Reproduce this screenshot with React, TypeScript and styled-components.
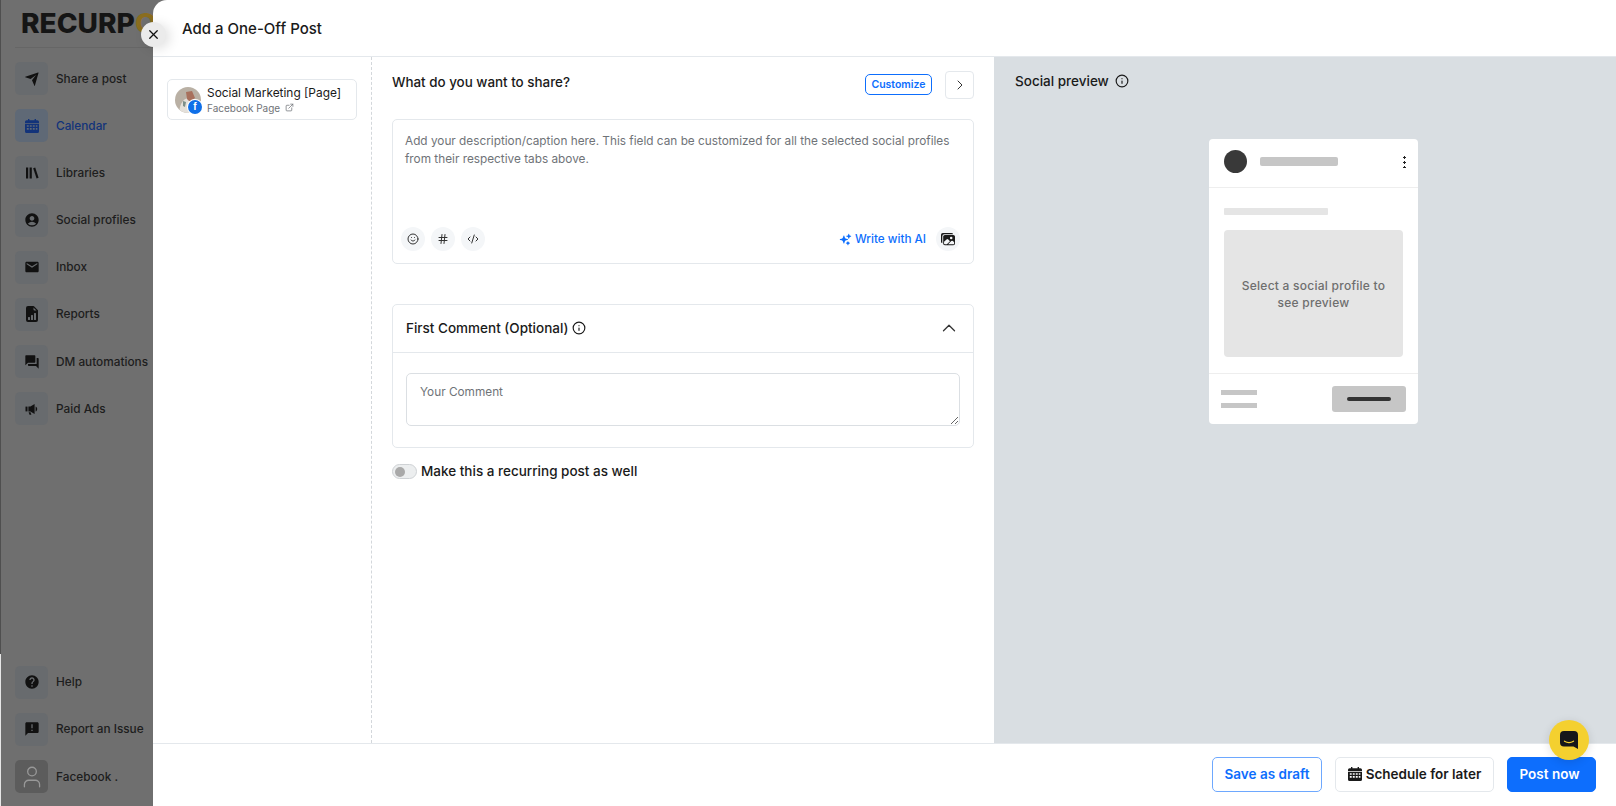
import styled, { createGlobalStyle } from "styled-components";
import type { ReactNode } from "react";
import { MdAccountCircle, MdAnnouncement, MdForum, MdHelp, MdMail } from "react-icons/md";
import { BsFileEarmarkBarGraphFill } from "react-icons/bs";
import { RiSendPlaneFill } from "react-icons/ri";
import { HiSparkles } from "react-icons/hi2";
import { IoImages } from "react-icons/io5";
import {
  LuChevronRight,
  LuChevronUp,
  LuCodeXml,
  LuExternalLink,
  LuHash,
  LuInfo,
  LuSmile,
  LuUser,
  LuX,
} from "react-icons/lu";

const colors = {
  blue: "#0d6efd",
  line: "#e4e8ec",
  dimBg: "#6f6f6f",
  dimBox: "#686b6e",
  dimText: "#1d1d1d",
  text: "#1a1a1a",
  muted: "#6f7378",
};

const GlobalStyle = createGlobalStyle`
  * { box-sizing: border-box; }
  html, body { margin: 0; height: 100%; }
  body { font-family: Inter, "Liberation Sans", sans-serif; color: ${colors.text}; background: ${colors.dimBg}; }
`;

const Page = styled.div`
  display: flex;
  height: 100vh;
  overflow: hidden;
`;

/* dimmed app nav behind the drawer */
const Sidebar = styled.aside`
  position: relative;
  flex: 0 0 153px;
  display: flex;
  flex-direction: column;
  background: ${colors.dimBg};
  padding: 0 0 13px 15px;
  &::before {
    content: "";
    position: absolute;
    left: 0;
    top: 0;
    width: 1px;
    height: 654px;
    background: #4f4f4f;
  }
  &::after {
    content: "";
    position: absolute;
    left: 0;
    top: 654px;
    bottom: 0;
    width: 1px;
    background: #e6e6e6;
  }
`;

const LogoRow = styled.div`
  height: 48px;
  margin-bottom: 14px;
  padding: 8px 0 0 6px;
  border-bottom: 1px solid #666;
  white-space: nowrap;
`;

const LogoText = styled.span`
  display: inline-block;
  font-size: 27px;
  line-height: 32px;
  font-weight: 800;
  color: #151515;
  transform: scaleX(1.04);
  transform-origin: left center;
`;

const LogoRing = styled.span`
  color: #8a6d1f;
`;

const NavList = styled.nav`
  display: flex;
  flex-direction: column;
  gap: 14.2px;
`;

const BottomNav = styled(NavList)`
  margin-top: auto;
`;

const NavItem = styled.div`
  display: flex;
  align-items: center;
  gap: 8px;
  height: 33px;
`;

const NavIcon = styled.span<{ $active?: boolean; $user?: boolean }>`
  flex: 0 0 33px;
  height: 33px;
  display: flex;
  align-items: center;
  justify-content: center;
  border-radius: 5px;
  font-size: 16px;
  color: ${(p) => (p.$active ? "#12337a" : p.$user ? "#989898" : "#111")};
  background: ${(p) => (p.$active ? "#5f6976" : p.$user ? "#5c5c5c" : colors.dimBox)};
`;

const NavLabel = styled.span<{ $active?: boolean }>`
  font-size: 11.8px;
  font-weight: 500;
  white-space: nowrap;
  color: ${(p) => (p.$active ? "#12337a" : colors.dimText)};
`;

const Drawer = styled.main`
  position: relative;
  flex: 1;
  min-width: 0;
  display: flex;
  flex-direction: column;
  background: #fff;
  border-top-left-radius: 14px;
`;

const CloseButton = styled.button`
  position: absolute;
  left: -12px;
  top: 22px;
  width: 25px;
  height: 25px;
  padding: 0;
  border: 0;
  border-radius: 50%;
  display: flex;
  align-items: center;
  justify-content: center;
  font-size: 15px;
  color: #111;
  background: #ebebeb;
  box-shadow: 4px 2px 12px rgba(0, 0, 0, 0.12);
`;

const DrawerHeader = styled.header`
  flex: 0 0 57px;
  display: flex;
  align-items: center;
  padding-left: 29px;
  border-bottom: 1px solid ${colors.line};
  font-size: 15px;
  font-weight: 500;
`;

const DrawerBody = styled.div`
  flex: 1;
  min-height: 0;
  display: flex;
`;

const ProfilesColumn = styled.section`
  flex: 0 0 219px;
  padding: 22px 14px;
  border-right: 1px dashed #d3d7db;
`;

const ProfileCard = styled.div`
  display: flex;
  align-items: center;
  gap: 6px;
  height: 41px;
  padding-left: 7px;
  border: 1px solid ${colors.line};
  border-radius: 5px;
`;

const AvatarWrap = styled.div`
  position: relative;
  width: 26px;
  height: 26px;
  flex: none;
`;

const FbBadge = styled.span`
  position: absolute;
  right: -1px;
  bottom: -1px;
  width: 14px;
  height: 14px;
  border-radius: 50%;
  display: flex;
  align-items: center;
  justify-content: center;
  background: #0f6fe8;
  box-shadow: 0 0 0 1px #fff;
  color: #fff;
  font-family: "Liberation Sans", sans-serif;
  font-size: 10px;
  font-weight: 700;
`;

const ProfileName = styled.div`
  font-size: 11.9px;
  line-height: 16px;
  white-space: nowrap;
`;

const ProfileType = styled.div`
  display: flex;
  align-items: center;
  gap: 5px;
  font-size: 10px;
  line-height: 14px;
  color: ${colors.muted};
  svg {
    font-size: 9px;
  }
`;

const EditorColumn = styled.section`
  flex: 0 0 622px;
  padding: 14px 20px 0;
`;

const EditorTop = styled.div`
  display: flex;
  align-items: flex-start;
  margin-bottom: 20px;
`;

const Heading = styled.h2`
  flex: 1;
  margin: 1px 0 0;
  font-size: 13.4px;
  line-height: 20px;
  font-weight: 500;
`;

const CustomizeButton = styled.button`
  height: 21px;
  width: 67px;
  margin: 3px 13px 0 0;
  padding: 0;
  border: 1px solid ${colors.blue};
  border-radius: 5px;
  background: #fff;
  color: ${colors.blue};
  font: 600 10.5px Inter, sans-serif;
`;

const SquareButton = styled.button`
  width: 29px;
  height: 28px;
  padding: 0;
  border: 1px solid ${colors.line};
  border-radius: 4px;
  background: #fff;
  color: #333;
  font-size: 16px;
  display: flex;
  align-items: center;
  justify-content: center;
`;

const CaptionCard = styled.div`
  height: 145px;
  display: flex;
  flex-direction: column;
  justify-content: space-between;
  padding: 12px 13px 12px 8px;
  border: 1px solid ${colors.line};
  border-radius: 5px;
`;

const CaptionText = styled.p`
  margin: 0;
  padding-left: 4px;
  font-size: 11.8px;
  line-height: 18px;
  color: ${colors.muted};
`;

const CaptionTools = styled.div`
  display: flex;
  align-items: center;
  gap: 6px;
`;

const RoundTool = styled.span<{ $dark?: boolean }>`
  width: 24px;
  height: 24px;
  border-radius: 50%;
  display: flex;
  align-items: center;
  justify-content: center;
  font-size: ${(p) => (p.$dark ? "14px" : "12px")};
  color: ${(p) => (p.$dark ? "#1a1a1a" : "#333")};
  background: #f4f6f8;
`;

const WriteAi = styled.span`
  margin-left: auto;
  margin-right: 4px;
  display: flex;
  align-items: center;
  gap: 3px;
  font-size: 11.7px;
  font-weight: 500;
  color: ${colors.blue};
  svg {
    font-size: 13px;
  }
`;

const CommentCard = styled.div`
  margin-top: 40px;
  border: 1px solid ${colors.line};
  border-radius: 5px;
`;

const CommentHeader = styled.div`
  height: 48px;
  display: flex;
  align-items: center;
  gap: 4px;
  padding: 0 13px 2px;
  border-bottom: 1px solid ${colors.line};
  font-size: 13.5px;
  font-weight: 500;
`;

const InfoMark = styled(LuInfo)`
  font-size: 14px;
`;

const CollapseIcon = styled(LuChevronUp)`
  margin-left: auto;
  font-size: 22px;
  color: #333;
`;

const CommentBody = styled.div`
  padding: 20px 13px 21px;
`;

const CommentInput = styled.textarea`
  display: block;
  width: 100%;
  height: 53px;
  padding: 9px 13px;
  border: 1px solid #dbdfe3;
  border-radius: 5px;
  outline: none;
  resize: vertical;
  font: 11.8px/18px Inter, sans-serif;
  &::placeholder {
    color: ${colors.muted};
    opacity: 1;
  }
`;

const RecurringRow = styled.label`
  display: flex;
  align-items: center;
  gap: 4px;
  margin-top: 15px;
  font-size: 13.5px;
  font-weight: 500;
`;

const Toggle = styled.span`
  width: 25px;
  height: 15px;
  padding: 2px;
  border: 1px solid #cfd2d5;
  border-radius: 8px;
  background: #eceeef;
  &::before {
    content: "";
    display: block;
    width: 10px;
    height: 10px;
    border-radius: 50%;
    background: #a9a9a9;
  }
`;

const PreviewColumn = styled.section`
  flex: 1;
  padding: 14px 21px;
  background: #d9dee2;
`;

const PreviewTitle = styled.div`
  display: flex;
  align-items: center;
  gap: 6px;
  height: 20px;
  font-size: 13.5px;
  font-weight: 500;
`;

const PreviewCard = styled.div`
  width: 209px;
  margin: 48px 0 0 194px;
  border-radius: 4px;
  background: #fff;
`;

const PreviewHead = styled.div`
  height: 49px;
  display: flex;
  align-items: center;
  padding: 0 12px 3px 15px;
  border-bottom: 1px solid #eeeeee;
`;

const PreviewDot = styled.span`
  width: 23px;
  height: 23px;
  border-radius: 50%;
  background: #393939;
`;

const NameBar = styled.span`
  width: 78px;
  height: 9px;
  margin-left: 13px;
  border-radius: 2px;
  background: #c6c6c6;
`;

const Kebab = styled.span`
  margin-left: auto;
  width: 3px;
  height: 13px;
  background: radial-gradient(circle, #222 1.1px, transparent 1.4px) 0 0 / 3px 5px;
`;

const PreviewBody = styled.div`
  padding: 20px 15px 16px;
  border-bottom: 1px solid #eeeeee;
`;

const CaptionBar = styled.div`
  width: 104px;
  height: 7px;
  margin-bottom: 15px;
  border-radius: 1px;
  background: #e5e5e5;
`;

const PreviewImage = styled.div`
  height: 127px;
  display: flex;
  align-items: center;
  justify-content: center;
  padding: 0 10px;
  border-radius: 4px;
  background: #e5e5e5;
  text-align: center;
  font-size: 12px;
  line-height: 17px;
  font-weight: 500;
  letter-spacing: 0.25px;
  color: #6e6e6e;
`;

const PreviewFoot = styled.div`
  height: 50px;
  display: flex;
  align-items: center;
  justify-content: space-between;
  padding: 0 12px;
`;

const FootLines = styled.div`
  display: flex;
  flex-direction: column;
  gap: 8px;
`;

const FootLine = styled.span`
  width: 36px;
  height: 5px;
  background: #c6c6c6;
`;

const FootButton = styled.span`
  width: 74px;
  height: 26px;
  display: flex;
  align-items: center;
  justify-content: center;
  border-radius: 3px;
  background: #c6c6c6;
  &::before {
    content: "";
    width: 44px;
    height: 4px;
    border-radius: 2px;
    background: #333;
  }
`;

const DrawerFooter = styled.footer`
  position: relative;
  flex: 0 0 63px;
  display: flex;
  align-items: center;
  justify-content: flex-end;
  gap: 13px;
  padding: 0 20px 2px 0;
  border-top: 1px solid ${colors.line};
`;

const FooterButton = styled.button<{ $kind: "outline" | "plain" | "solid" }>`
  height: 35px;
  padding: 0 ${(p) => (p.$kind === "solid" ? "4px" : "0")} 0 0;
  display: flex;
  align-items: center;
  justify-content: center;
  gap: 4px;
  width: ${(p) => (p.$kind === "outline" ? "110px" : p.$kind === "plain" ? "159px" : "89px")};
  border-radius: 5px;
  border: 1px solid ${(p) => (p.$kind === "outline" ? "#6ea8fe" : p.$kind === "plain" ? colors.line : colors.blue)};
  background: ${(p) => (p.$kind === "solid" ? colors.blue : "#fff")};
  color: ${(p) => (p.$kind === "plain" ? colors.text : p.$kind === "solid" ? "#fff" : colors.blue)};
  font: 600 13.5px Inter, sans-serif;
`;

const ChatBubble = styled.div`
  position: absolute;
  right: 27px;
  top: -24px;
  width: 40px;
  height: 40px;
  border-radius: 50%;
  display: flex;
  align-items: center;
  justify-content: center;
  background: #f4d02f;
  box-shadow: 0 2px 10px rgba(0, 0, 0, 0.12);
`;

type NavEntry = { label: string; icon: ReactNode; active?: boolean; user?: boolean };

const LibraryIcon = () => (
  <svg width="16" height="16" viewBox="0 0 16 16" fill="#111">
    <rect x="2" y="2.5" width="2.2" height="11" />
    <rect x="5.6" y="2.5" width="2.2" height="11" />
    <path d="M9.2 3.2 11.2 2.5 14.6 12.8 12.6 13.5z" />
  </svg>
);

const CalendarGrid = ({ size = 14 }: { size?: number }) => (
  <svg width={size} height={size} viewBox="0 0 14 14" fill="currentColor">
    <path d="M3 0h1.4v1.2h5.2V0H11v1.2h1.4A1.6 1.6 0 0 1 14 2.8V3.9H0V2.8a1.6 1.6 0 0 1 1.6-1.6H3z" />
    <path
      fillRule="evenodd"
      d="M0 4.7h14v7.7a1.6 1.6 0 0 1-1.6 1.6H1.6A1.6 1.6 0 0 1 0 12.4zM1.8 6.2v1.6h1.9V6.2zm3 0v1.6h1.9V6.2zm3 0v1.6h1.9V6.2zm3 0v1.6h1.6V6.2zm-9 2.9v1.6h1.9V9.1zm3 0v1.6h1.9V9.1zm3 0v1.6h1.9V9.1zm3 0v1.6h1.6V9.1z"
    />
  </svg>
);

const MegaphoneIcon = () => (
  <svg width="16" height="16" viewBox="0 0 16 16" fill="#111">
    <path d="M1.5 5.6h2v4.8h-2z" />
    <path d="M4.4 5.6h2L10.6 3v10L6.4 10.4h-2z" />
    <path d="M11.6 5.4c1 .4 1.6 1.4 1.6 2.6s-.6 2.2-1.6 2.6z" />
    <path d="M4.6 11.2h1.9l.9 2.6H5.5z" />
  </svg>
);

const mainNav: NavEntry[] = [
  { label: "Share a post", icon: <RiSendPlaneFill /> },
  { label: "Calendar", icon: <CalendarGrid />, active: true },
  { label: "Libraries", icon: <LibraryIcon /> },
  { label: "Social profiles", icon: <MdAccountCircle /> },
  { label: "Inbox", icon: <MdMail /> },
  { label: "Reports", icon: <BsFileEarmarkBarGraphFill /> },
  { label: "DM automations", icon: <MdForum /> },
  { label: "Paid Ads", icon: <MegaphoneIcon /> },
];

const bottomNav: NavEntry[] = [
  { label: "Help", icon: <MdHelp /> },
  { label: "Report an Issue", icon: <MdAnnouncement /> },
  { label: "Facebook .", icon: <LuUser size={26} strokeWidth={1.2} />, user: true },
];

const renderNav = (items: NavEntry[]) =>
  items.map((item) => (
    <NavItem key={item.label}>
      <NavIcon $active={item.active} $user={item.user}>
        {item.icon}
      </NavIcon>
      <NavLabel $active={item.active}>{item.label}</NavLabel>
    </NavItem>
  ));

const ProfilePhoto = () => (
  <svg width="26" height="26" viewBox="0 0 26 26">
    <defs>
      <clipPath id="photo">
        <circle cx="13" cy="13" r="13" />
      </clipPath>
    </defs>
    <g clipPath="url(#photo)">
      <rect width="26" height="26" fill="#b9b0a4" />
      <path d="M4 26C5 15 9 11 15 11s8 6 9 15z" fill="#e4e0da" />
      <path d="M11 5l6-1 3 7-5 4-3-3z" fill="#a8705c" />
      <path d="M8 14l3 1-1 5-2-1z" fill="#7d8f8a" />
    </g>
  </svg>
);

const ChatGlyph = () => (
  <svg width="20" height="20" viewBox="0 0 20 20">
    <path d="M5 1h10a4 4 0 0 1 4 4v14l-4.5-2.6H5a4 4 0 0 1-4-4V5a4 4 0 0 1 4-4z" fill="#15171a" />
    <path d="M5.5 11.2c2.6 1.6 6.4 1.6 9 0" fill="none" stroke="#f4d02f" strokeWidth="1.3" strokeLinecap="round" />
  </svg>
);

export default function App() {
  return (
    <Page>
      <GlobalStyle />
      <Sidebar>
        <LogoRow>
          <LogoText>
            RECURP<LogoRing>O</LogoRing>
          </LogoText>
        </LogoRow>
        <NavList>{renderNav(mainNav)}</NavList>
        <BottomNav>{renderNav(bottomNav)}</BottomNav>
      </Sidebar>

      <Drawer>
        <CloseButton aria-label="Close">
          <LuX />
        </CloseButton>
        <DrawerHeader>Add a One-Off Post</DrawerHeader>

        <DrawerBody>
          <ProfilesColumn>
            <ProfileCard>
              <AvatarWrap>
                <ProfilePhoto />
                <FbBadge>f</FbBadge>
              </AvatarWrap>
              <div>
                <ProfileName>Social Marketing [Page]</ProfileName>
                <ProfileType>
                  Facebook Page <LuExternalLink />
                </ProfileType>
              </div>
            </ProfileCard>
          </ProfilesColumn>

          <EditorColumn>
            <EditorTop>
              <Heading>What do you want to share?</Heading>
              <CustomizeButton>Customize</CustomizeButton>
              <SquareButton aria-label="Next">
                <LuChevronRight strokeWidth={1.5} />
              </SquareButton>
            </EditorTop>

            <CaptionCard>
              <CaptionText>
                Add your description/caption here. This field can be customized for all the selected social profiles
                from their respective tabs above.
              </CaptionText>
              <CaptionTools>
                <RoundTool>
                  <LuSmile />
                </RoundTool>
                <RoundTool>
                  <LuHash />
                </RoundTool>
                <RoundTool>
                  <LuCodeXml />
                </RoundTool>
                <WriteAi>
                  <HiSparkles /> Write with AI
                </WriteAi>
                <RoundTool $dark>
                  <IoImages />
                </RoundTool>
              </CaptionTools>
            </CaptionCard>

            <CommentCard>
              <CommentHeader>
                First Comment (Optional) <InfoMark />
                <CollapseIcon strokeWidth={1.4} />
              </CommentHeader>
              <CommentBody>
                <CommentInput placeholder="Your Comment" />
              </CommentBody>
            </CommentCard>

            <RecurringRow>
              <Toggle />
              Make this a recurring post as well
            </RecurringRow>
          </EditorColumn>

          <PreviewColumn>
            <PreviewTitle>
              Social preview <InfoMark />
            </PreviewTitle>
            <PreviewCard>
              <PreviewHead>
                <PreviewDot />
                <NameBar />
                <Kebab />
              </PreviewHead>
              <PreviewBody>
                <CaptionBar />
                <PreviewImage>Select a social profile to see preview</PreviewImage>
              </PreviewBody>
              <PreviewFoot>
                <FootLines>
                  <FootLine />
                  <FootLine />
                </FootLines>
                <FootButton />
              </PreviewFoot>
            </PreviewCard>
          </PreviewColumn>
        </DrawerBody>

        <DrawerFooter>
          <FooterButton $kind="outline">Save as draft</FooterButton>
          <FooterButton $kind="plain">
            <CalendarGrid /> Schedule for later
          </FooterButton>
          <FooterButton $kind="solid">Post now</FooterButton>
          <ChatBubble>
            <ChatGlyph />
          </ChatBubble>
        </DrawerFooter>
      </Drawer>
    </Page>
  );
}
